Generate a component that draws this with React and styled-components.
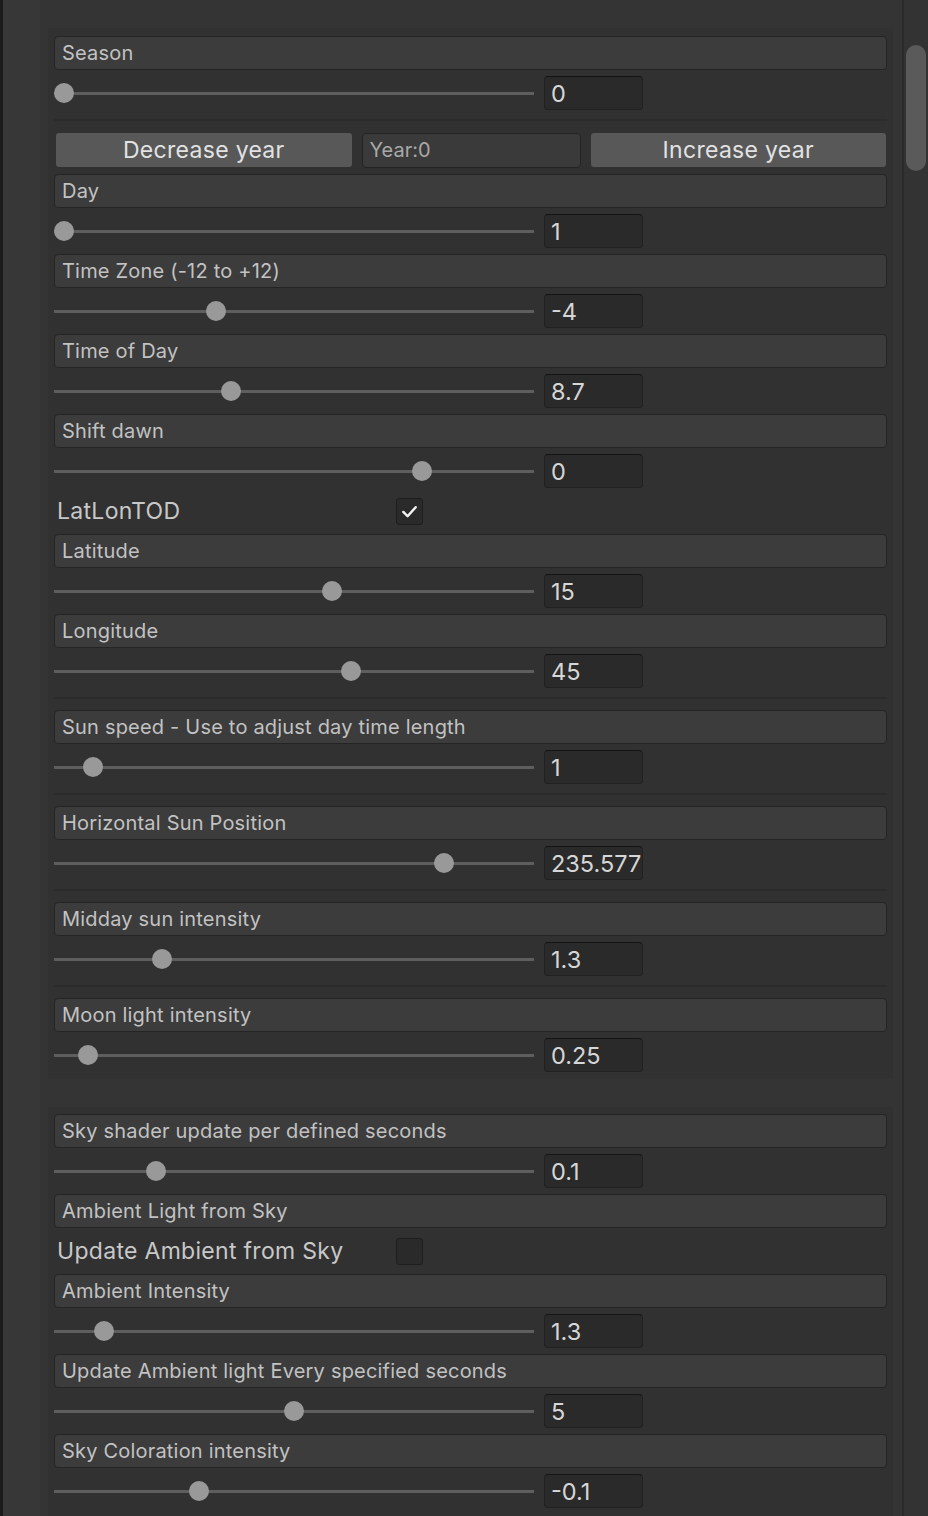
import React from "react";
import styled, { createGlobalStyle } from "styled-components";

const GlobalStyle = createGlobalStyle`
	html, body {
		margin: 0;
		padding: 0;
		background: #333333;
	}
	body {
		font-family: Inter, "Noto Sans", "Liberation Sans", sans-serif;
		-webkit-font-smoothing: antialiased;
	}
`;

const WindowStyled = styled.div`
	display: flex;
	width: 928px;
	height: 1516px;
	overflow: hidden;
	background: #333333;
`;

const EdgeStyled = styled.div`
	width: 3px;
	flex-shrink: 0;
	background: #1b1b1b;
`;

const GutterStyled = styled.div`
	width: 37px;
	flex-shrink: 0;
	background: #373737;
`;

const MainStyled = styled.div`
	flex: 1;
	display: flex;
	flex-direction: column;
	gap: 28px;
	padding: 28px 9px 0 8px;
	background: #343434;
`;

const PanelStyled = styled.div`
	display: flex;
	flex-direction: column;
	gap: 6px;
	padding: ${(p) => (p.$first ? "8px 6px 7px" : "7px 6px 8px")};
	background: #313131;
`;

const ScrollTrackStyled = styled.div`
	width: 26px;
	flex-shrink: 0;
	box-sizing: border-box;
	border-left: 2px solid #2a2a2a;
	padding: 45px 2px 0 2px;
	background: #333333;
`;

const ScrollThumbStyled = styled.div`
	height: 126px;
	border-radius: 10px;
	background: #5a5a5a;
`;

const HeaderStyled = styled.div`
	height: 34px;
	box-sizing: border-box;
	display: flex;
	align-items: center;
	padding-left: 7px;
	border: 1px solid #242424;
	border-radius: 4px;
	background: #3c3c3c;
	color: #c2c2c2;
	font-size: 20px;
	letter-spacing: 0.2px;
	white-space: nowrap;
	overflow: hidden;
`;

const SliderRowStyled = styled.div`
	height: 34px;
	display: flex;
	align-items: center;
	gap: 10px;
`;

const TrackStyled = styled.div`
	position: relative;
	width: 480px;
	height: 3px;
	background: #5e5e5e;
	flex-shrink: 0;
`;

const ThumbStyled = styled.div`
	position: absolute;
	top: 50%;
	width: 20px;
	height: 20px;
	border-radius: 50%;
	background: #999999;
	transform: translateY(-50%);
`;

const NumberFieldStyled = styled.div`
	width: 99px;
	height: 34px;
	box-sizing: border-box;
	display: flex;
	align-items: center;
	padding-left: 6px;
	border: 1px solid #212121;
	border-top-color: #141414;
	border-radius: 4px;
	background: #2a2a2a;
	color: #d6d6d6;
	font-size: 23.5px;
	white-space: nowrap;
	overflow: hidden;
`;

const SeparatorStyled = styled.div`
	height: 10px;
	display: flex;
	flex-direction: column;
	padding-top: 3px;
	box-sizing: border-box;

	&::before {
		content: "";
		height: 2px;
		background: #2b2b2b;
	}
`;

const ButtonRowStyled = styled.div`
	height: 36px;
	display: grid;
	grid-template-columns: 1fr 219px 1fr;
	align-items: center;
	gap: 10px;
	padding: 0 1px 0 2px;
`;

const ButtonStyled = styled.div`
	height: 34px;
	display: flex;
	align-items: center;
	justify-content: center;
	border-radius: 3px;
	background: #585858;
	color: #e2e2e2;
	font-size: 23px;
	letter-spacing: 0.3px;
`;

const YearFieldStyled = styled.div`
	height: 35px;
	box-sizing: border-box;
	display: flex;
	align-items: center;
	padding-left: 7px;
	border: 1px solid #232323;
	border-radius: 4px;
	background: #3a3a3a;
	color: #a8a8a8;
	font-size: 20px;
`;

const ToggleRowStyled = styled.div`
	height: 34px;
	display: flex;
	align-items: center;
	padding-left: 3px;
`;

const ToggleLabelStyled = styled.div`
	width: 339px;
	color: #c8c8c8;
	font-size: 23px;
	letter-spacing: 0.3px;
	white-space: nowrap;
`;

const CheckboxStyled = styled.div`
	width: 27px;
	height: 27px;
	box-sizing: border-box;
	display: flex;
	align-items: center;
	justify-content: center;
	border: 1px solid #1e1e1e;
	border-radius: 3px;
	background: #2a2a2a;
`;

// pos = thumb centre x in the page, track starts at x 54
const Slider = ({ value, pos }) => (
	<SliderRowStyled>
		<TrackStyled>
			<ThumbStyled style={{ left: `${pos - 64}px` }} />
		</TrackStyled>
		<NumberFieldStyled>{value}</NumberFieldStyled>
	</SliderRowStyled>
);

const Field = ({ label, value, pos }) => (
	<>
		<HeaderStyled>{label}</HeaderStyled>
		<Slider value={value} pos={pos} />
	</>
);

const Toggle = ({ label, checked }) => (
	<ToggleRowStyled>
		<ToggleLabelStyled>{label}</ToggleLabelStyled>
		<CheckboxStyled>
			{checked && (
				<svg width="19" height="19" viewBox="0 0 20 20">
					<path
						d="M3.5 10.5 L8 15 L16.5 5.5"
						fill="none"
						stroke="#f2f2f2"
						strokeWidth="2.6"
						strokeLinecap="round"
						strokeLinejoin="round"
					/>
				</svg>
			)}
		</CheckboxStyled>
	</ToggleRowStyled>
);

export default function App() {
	return (
		<>
			<GlobalStyle />
			<WindowStyled>
				<EdgeStyled />
				<GutterStyled />
				<MainStyled>
					<PanelStyled $first>
						<Field label="Season" value="0" pos={64} />
						<SeparatorStyled />
						<ButtonRowStyled>
							<ButtonStyled>Decrease year</ButtonStyled>
							<YearFieldStyled>Year:0</YearFieldStyled>
							<ButtonStyled>Increase year</ButtonStyled>
						</ButtonRowStyled>
						<Field label="Day" value="1" pos={64} />
						<Field label="Time Zone (-12 to +12)" value="-4" pos={216} />
						<Field label="Time of Day" value="8.7" pos={231} />
						<Field label="Shift dawn" value="0" pos={422} />
						<Toggle label="LatLonTOD" checked />
						<Field label="Latitude" value="15" pos={332} />
						<Field label="Longitude" value="45" pos={351} />
						<SeparatorStyled />
						<Field label="Sun speed - Use to adjust day time length" value="1" pos={93} />
						<SeparatorStyled />
						<Field label="Horizontal Sun Position" value="235.577" pos={444} />
						<SeparatorStyled />
						<Field label="Midday sun intensity" value="1.3" pos={162} />
						<SeparatorStyled />
						<Field label="Moon light intensity" value="0.25" pos={88} />
					</PanelStyled>
					<PanelStyled>
						<Field label="Sky shader update per defined seconds" value="0.1" pos={156} />
						<HeaderStyled>Ambient Light from Sky</HeaderStyled>
						<Toggle label="Update Ambient from Sky" />
						<Field label="Ambient Intensity" value="1.3" pos={104} />
						<Field label="Update Ambient light Every specified seconds" value="5" pos={294} />
						<Field label="Sky Coloration intensity" value="-0.1" pos={199} />
					</PanelStyled>
				</MainStyled>
				<ScrollTrackStyled>
					<ScrollThumbStyled />
				</ScrollTrackStyled>
			</WindowStyled>
		</>
	);
}
